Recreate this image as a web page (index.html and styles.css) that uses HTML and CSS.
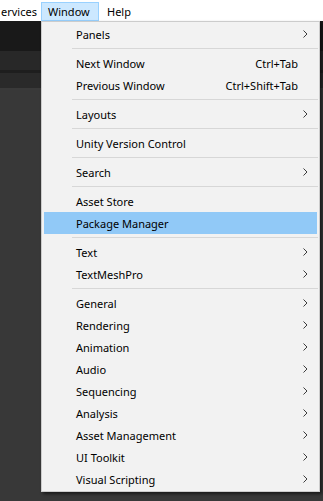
FILE: index.html
```html
<!DOCTYPE html>
<html lang="en">

<head>
    <meta charset="UTF-8">
    <meta name="viewport" content="width=device-width, initial-scale=1.0">
    <title>Window Menu</title>
    <link rel="stylesheet" href="styles.css">
</head>

<body>
    <div class="menubar">
        <span class="bar-item cut">ervices</span>
        <span class="bar-item open">Window</span>
        <span class="bar-item">Help</span>
    </div>

    <div class="editor">
        <div class="toolbar"></div>
        <div class="tabs"></div>
        <div class="strip"></div>
        <div class="panel"></div>
    </div>

    <div class="menu">
        <div class="item"><span class="label">Panels</span><span class="sub"><svg width="5" height="8" viewBox="0 0 5 8"><path d="M0.5 0.5 L4 4 L0.5 7.5" /></svg></span></div>
        <div class="sep"></div>
        <div class="item"><span class="label">Next Window</span><span class="key">Ctrl+Tab</span><span class="sub"></span></div>
        <div class="item"><span class="label">Previous Window</span><span class="key">Ctrl+Shift+Tab</span><span class="sub"></span></div>
        <div class="sep"></div>
        <div class="item"><span class="label">Layouts</span><span class="sub"><svg width="5" height="8" viewBox="0 0 5 8"><path d="M0.5 0.5 L4 4 L0.5 7.5" /></svg></span></div>
        <div class="sep"></div>
        <div class="item"><span class="label">Unity Version Control</span><span class="sub"></span></div>
        <div class="sep"></div>
        <div class="item"><span class="label">Search</span><span class="sub"><svg width="5" height="8" viewBox="0 0 5 8"><path d="M0.5 0.5 L4 4 L0.5 7.5" /></svg></span></div>
        <div class="sep"></div>
        <div class="item"><span class="label">Asset Store</span><span class="sub"></span></div>
        <div class="item active"><span class="label">Package Manager</span><span class="sub"></span></div>
        <div class="sep"></div>
        <div class="item"><span class="label">Text</span><span class="sub"><svg width="5" height="8" viewBox="0 0 5 8"><path d="M0.5 0.5 L4 4 L0.5 7.5" /></svg></span></div>
        <div class="item"><span class="label">TextMeshPro</span><span class="sub"><svg width="5" height="8" viewBox="0 0 5 8"><path d="M0.5 0.5 L4 4 L0.5 7.5" /></svg></span></div>
        <div class="sep"></div>
        <div class="item"><span class="label">General</span><span class="sub"><svg width="5" height="8" viewBox="0 0 5 8"><path d="M0.5 0.5 L4 4 L0.5 7.5" /></svg></span></div>
        <div class="item"><span class="label">Rendering</span><span class="sub"><svg width="5" height="8" viewBox="0 0 5 8"><path d="M0.5 0.5 L4 4 L0.5 7.5" /></svg></span></div>
        <div class="item"><span class="label">Animation</span><span class="sub"><svg width="5" height="8" viewBox="0 0 5 8"><path d="M0.5 0.5 L4 4 L0.5 7.5" /></svg></span></div>
        <div class="item"><span class="label">Audio</span><span class="sub"><svg width="5" height="8" viewBox="0 0 5 8"><path d="M0.5 0.5 L4 4 L0.5 7.5" /></svg></span></div>
        <div class="item"><span class="label">Sequencing</span><span class="sub"><svg width="5" height="8" viewBox="0 0 5 8"><path d="M0.5 0.5 L4 4 L0.5 7.5" /></svg></span></div>
        <div class="item"><span class="label">Analysis</span><span class="sub"><svg width="5" height="8" viewBox="0 0 5 8"><path d="M0.5 0.5 L4 4 L0.5 7.5" /></svg></span></div>
        <div class="item"><span class="label">Asset Management</span><span class="sub"><svg width="5" height="8" viewBox="0 0 5 8"><path d="M0.5 0.5 L4 4 L0.5 7.5" /></svg></span></div>
        <div class="item"><span class="label">UI Toolkit</span><span class="sub"><svg width="5" height="8" viewBox="0 0 5 8"><path d="M0.5 0.5 L4 4 L0.5 7.5" /></svg></span></div>
        <div class="item"><span class="label">Visual Scripting</span><span class="sub"><svg width="5" height="8" viewBox="0 0 5 8"><path d="M0.5 0.5 L4 4 L0.5 7.5" /></svg></span></div>
    </div>
</body>

</html>
```

FILE: styles.css
```css
body {
    margin: 0;
    width: 323px;
    height: 501px;
    overflow: hidden;
    position: relative;
    background-color: #383838;
    font-family: "Noto Sans", "Open Sans", sans-serif;
    font-size: 11px;
    color: #000;
}

.menubar {
    display: flex;
    height: 21px;
    background: #fff;
    overflow: hidden;
}

.bar-item {
    box-sizing: border-box;
    height: 19px;
    margin-top: 2px;
    padding: 0 7px;
    line-height: 17px;
    border: 1px solid transparent;
    white-space: nowrap;
}

.bar-item.cut {
    width: 41px;
    padding: 0;
}

.bar-item.open {
    width: 58px;
    padding: 0 6px;
    background: #cce8ff;
    border-color: #99d1ff;
}

.editor .toolbar {
    height: 30px;
    background: #191919;
}

.editor .tabs {
    height: 19px;
    background: #282828;
    border-bottom: 3px solid #1e1e1e;
}

.editor .strip {
    height: 15px;
    background: #2a2a2a;
    border-bottom: 2px solid #3a3a3a;
}

.editor .panel {
    height: 420px;
    background: #383838;
}

/* dropdown */
.menu {
    position: absolute;
    left: 41px;
    top: 21px;
    width: 275px;
    padding: 1px;
    background: #f2f2f2;
    border: 1px solid #cccccc;
    box-shadow: 2px 2px 3px rgba(0, 0, 0, 0.55);
}

.item {
    display: flex;
    align-items: center;
    height: 22px;
    margin: 0 1px;
    padding-left: 32px;
    white-space: nowrap;
}

.item.active {
    background: #91c9f7;
}

.label {
    flex: 1;
}

.key {
    text-align: right;
}

.sub {
    width: 19px;
    display: flex;
    align-items: center;
    padding-left: 5px;
    box-sizing: border-box;
}

.sub svg path {
    fill: none;
    stroke: #3c3c3c;
    stroke-width: 1;
}

.sep {
    height: 1px;
    margin: 3px 0 3px 29px;
    background: #d7d7d7;
}
```
